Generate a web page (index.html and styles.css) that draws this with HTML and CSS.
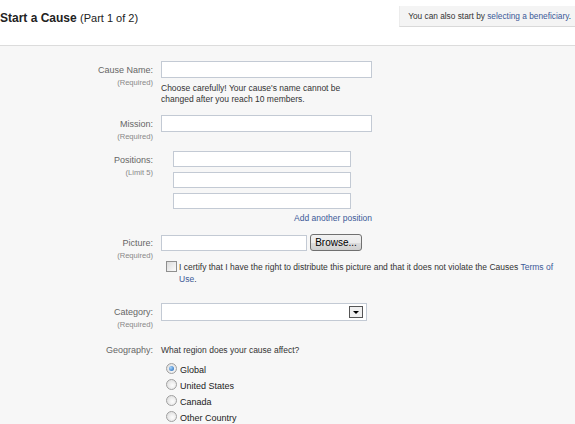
FILE: index.html
```html
<!DOCTYPE html>
<html lang="en">
<head>
  <meta charset="UTF-8">
  <title>Start a Cause</title>
  <link rel="stylesheet" href="styles.css">
</head>
<body>
  <div class="header">
    <h1><b>Start a Cause</b> <span class="part">(Part 1 of 2)</span></h1>
    <div class="alt-start">You can also start by <a href="#">selecting a beneficiary</a>.</div>
  </div>
  <form class="cause-form">
    <div class="row name-row">
      <label class="label">Cause Name:<small>(Required)</small></label>
      <div class="field">
        <input type="text" class="text wide">
        <p class="hint">Choose carefully! Your cause's name cannot be changed after you reach 10 members.</p>
      </div>
    </div>

    <div class="row mission-row">
      <label class="label">Mission:<small>(Required)</small></label>
      <div class="field">
        <input type="text" class="text wide">
      </div>
    </div>

    <div class="row positions-row">
      <label class="label">Positions:<small>(Limit 5)</small></label>
      <div class="field positions">
        <input type="text" class="text pos">
        <input type="text" class="text pos">
        <input type="text" class="text pos">
        <a href="#" class="add-link">Add another position</a>
      </div>
    </div>

    <div class="row picture-row">
      <label class="label">Picture:<small>(Required)</small></label>
      <div class="field">
        <div class="file-pick">
          <span class="file-box"></span>
          <button type="button" class="browse">Browse...</button>
        </div>
        <div class="certify">
          <span class="check"></span>
          <p>I certify that I have the right to distribute this picture and that it does not violate the Causes <a href="#">Terms of</a><br><a href="#">Use</a>.</p>
        </div>
      </div>
    </div>

    <div class="row category-row">
      <label class="label">Category:<small>(Required)</small></label>
      <div class="field">
        <div class="select"><span class="arrow"></span></div>
      </div>
    </div>

    <div class="row geo-row">
      <label class="label">Geography:</label>
      <div class="field">
        <p class="question">What region does your cause affect?</p>
        <ul class="regions">
          <li><span class="radio on"></span>Global</li>
          <li><span class="radio"></span>United States</li>
          <li><span class="radio"></span>Canada</li>
          <li><span class="radio"></span>Other Country</li>
        </ul>
      </div>
    </div>
  </form>
</body>
</html>
```

FILE: styles.css
```css
html, body {
  margin: 0;
  height: 100%;
}
body {
  font-family: "Liberation Sans", Arial, sans-serif;
  color: #333;
  background: #f7f7f7;
  overflow: hidden;
}
a {
  color: #3b5998;
  text-decoration: none;
}
p {
  margin: 0;
}
.header {
  background: #fff;
  height: 45px;
  border-bottom: 1px solid #dcdcdc;
  display: flex;
  justify-content: space-between;
  align-items: flex-start;
}
.header h1 {
  margin: 11px 0 0 0;
  font-size: 12px;
  font-weight: normal;
  color: #222;
}
.header .part {
  font-size: 11px;
}
.alt-start {
  margin-top: 6px;
  padding: 5px 4px 5px 8px;
  font-size: 8.3px;
  background: #f4f4f4;
  border-bottom: 1px solid #d9d9d9;
  border-left: 1px solid #ececec;
  color: #333;
}
.cause-form {
  padding-top: 15px;
}
.row {
  display: grid;
  grid-template-columns: 153px 1fr;
  column-gap: 8px;
}
.label {
  text-align: right;
  font-size: 9px;
  color: #666;
  padding-top: 4px;
  line-height: 11px;
}
.label small {
  display: block;
  font-size: 7.6px;
  color: #888;
  padding-top: 1px;
}
.text {
  display: block;
  box-sizing: border-box;
  height: 17px;
  margin: 0;
  padding: 0 2px;
  border: 1px solid #c3cad4;
  background: #fff;
}
.wide {
  width: 211px;
}
.hint {
  font-size: 8.5px;
  line-height: 11px;
  margin-top: 5px;
  width: 190px;
}
.mission-row {
  margin-top: 10px;
}
.positions-row {
  margin-top: 9px;
}
.positions {
  display: flex;
  flex-direction: column;
  gap: 5px;
  padding-left: 12px;
  width: 199px;
}
.pos {
  width: 178px;
  height: 16px;
}
.add-link {
  align-self: flex-end;
  font-size: 8.5px;
  margin-top: -1px;
}
.picture-row {
  margin-top: 11px;
}
.file-pick {
  display: flex;
  align-items: center;
  gap: 3px;
}
.file-box {
  width: 146px;
  height: 16px;
  border: 1px solid #c3cad4;
  background: #fff;
  box-sizing: border-box;
}
.browse {
  width: 52px;
  height: 17px;
  padding: 0;
  font-family: "Liberation Sans", Arial, sans-serif;
  font-size: 10px;
  color: #000;
  border: 1px solid #707070;
  border-radius: 3px;
  background: linear-gradient(#f2f2f2, #ebebeb 50%, #dddddd 51%, #cfcfcf);
}
.certify {
  display: flex;
  align-items: flex-start;
  gap: 2px;
  margin-top: 10px;
  padding-left: 5px;
}
.check {
  flex: none;
  width: 11px;
  height: 11px;
  box-sizing: border-box;
  border: 1px solid #8f8f8f;
  background: linear-gradient(135deg, #dcdcdc, #fbfbfb);
}
.certify p {
  font-size: 8.5px;
  line-height: 12px;
  width: 385px;
}
.category-row {
  margin-top: 18px;
}
.select {
  position: relative;
  box-sizing: border-box;
  width: 206px;
  height: 18px;
  border: 1px solid #c3cad4;
  background: #fff;
}
.arrow {
  position: absolute;
  right: 3px;
  top: 2px;
  width: 14px;
  height: 12px;
  box-sizing: border-box;
  border: 1px solid #555;
  background: #f0f0f0;
}
.arrow::after {
  content: "";
  position: absolute;
  left: 3px;
  top: 4px;
  border-left: 3px solid transparent;
  border-right: 3px solid transparent;
  border-top: 3px solid #000;
}
.geo-row {
  margin-top: 12px;
}
.geo-row .label {
  padding-top: 3px;
}
.question {
  font-size: 8.5px;
  line-height: 11px;
  margin-top: 3px;
}
.regions {
  list-style: none;
  margin: 6px 0 0 5px;
  padding: 0;
}
.regions li {
  display: flex;
  align-items: center;
  gap: 3px;
  height: 16px;
  font-size: 9px;
  color: #222;
}
.radio {
  width: 11px;
  height: 11px;
  box-sizing: border-box;
  border-radius: 50%;
  border: 1px solid #a0a0a0;
  background: radial-gradient(circle at 60% 60%, #fdfdfd, #d8d8d8);
  position: relative;
  top: -2px;
}
.radio.on::after {
  content: "";
  position: absolute;
  left: 2px;
  top: 2px;
  width: 5px;
  height: 5px;
  border-radius: 50%;
  background: radial-gradient(circle at 35% 35%, #a6d6ff, #1a5fb0);
}
```
